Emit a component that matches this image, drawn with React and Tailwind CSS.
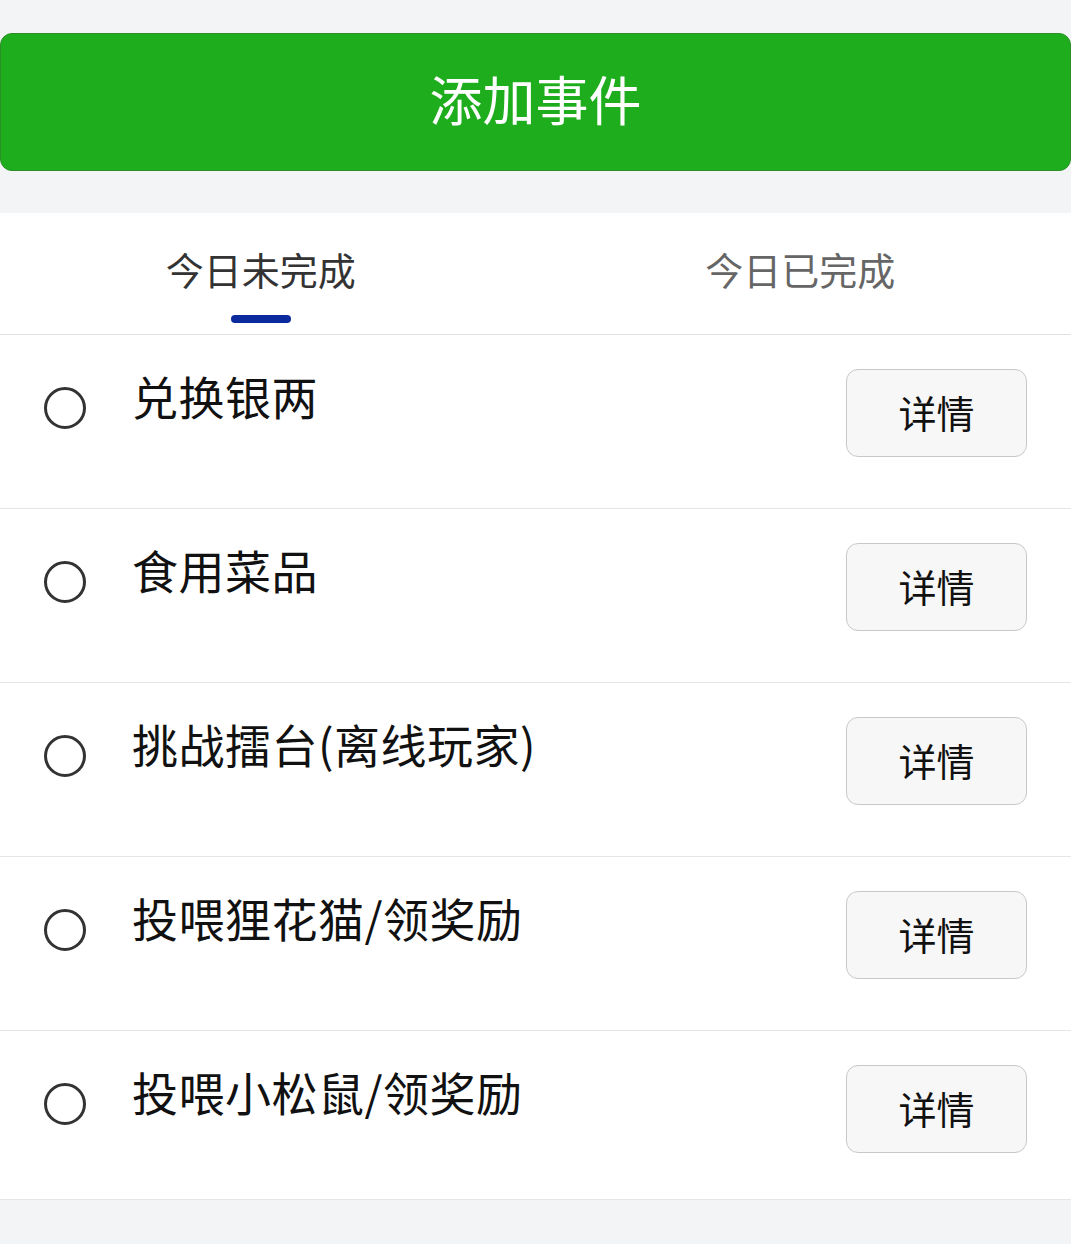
import React from "react";

const items = [
  "兑换银两",
  "食用菜品",
  "挑战擂台(离线玩家)",
  "投喂狸花猫/领奖励",
  "投喂小松鼠/领奖励",
];

const TaskRow = ({ title, last }) => {
  return (
    <div
      className={
        "flex items-start border-b border-[#e5e5e5] bg-white " +
        (last ? "h-[169px]" : "h-[174px]")
      }
    >
      <div className="ml-[44px] mt-[52px] h-[42px] w-[42px] shrink-0 rounded-full border-[3px] border-[#333333]" />
      <div className="ml-[46px] mt-[31px] flex-1 text-[46px] leading-[58px] tracking-[0.5px] text-[#111111]">
        {title}
      </div>
      <button className="mr-[44px] mt-[34px] flex h-[88px] w-[181px] shrink-0 items-center justify-center rounded-[12px] border border-[#c8c8c8] bg-[#f7f7f7] pb-[4px] text-[38px] text-[#111111]">
        详情
      </button>
    </div>
  );
};

export default function App() {
  return (
    <div
      className="min-h-[1244px] bg-[#f3f4f6]"
      style={{ fontFamily: '"Noto Sans CJK SC", "Noto Sans", sans-serif' }}
    >
      <div className="pt-[33px]">
        <button className="flex h-[138px] w-full items-center justify-center rounded-[12px] border border-[#2b8f25] bg-[#1dad1d] pb-[6px] text-[53px] text-white">
          添加事件
        </button>
      </div>

      <div className="mt-[42px] bg-white">
        <div className="flex h-[122px] border-b border-[#e2e2e2]">
          <div className="flex flex-1 flex-col items-center pr-[18px] pt-[32px]">
            <span className="text-[38px] leading-[48px] text-[#333333]">今日未完成</span>
            <span className="mt-[22px] h-[8px] w-[60px] rounded-full bg-[#0a2a9e]" />
          </div>
          <div className="flex flex-1 flex-col items-center pr-[10px] pt-[32px]">
            <span className="text-[38px] leading-[48px] text-[#666666]">今日已完成</span>
          </div>
        </div>
        {items.map((t, i) => (
          <TaskRow key={t} title={t} last={i === items.length - 1} />
        ))}
      </div>
    </div>
  );
}
